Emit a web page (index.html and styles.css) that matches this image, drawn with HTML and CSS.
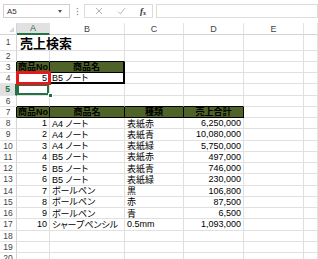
FILE: index.html
```html
<!DOCTYPE html>
<html lang="ja">
<head>
<meta charset="utf-8">
<title>売上検索</title>
<link rel="stylesheet" href="styles.css">
</head>
<body>
<div class="bar">
  <div class="namebox"><span class="nm">A5</span><span class="caret"></span></div>
  <div class="dots"><svg width="3" height="9" viewBox="0 0 3 9"><circle cx="1.5" cy="1.5" r="0.8" fill="#9a9a9a"/><circle cx="1.5" cy="4.5" r="0.8" fill="#9a9a9a"/><circle cx="1.5" cy="7.5" r="0.8" fill="#9a9a9a"/></svg></div>
  <div class="fxbox">
    <svg class="ico" width="8" height="8" viewBox="0 0 8 8"><path d="M1 1L7 7M7 1L1 7" stroke="#b4b4b4" stroke-width="1" fill="none"/></svg>
    <svg class="ico" width="9" height="8" viewBox="0 0 9 8"><path d="M1 4.5L3.3 6.8L8 1.2" stroke="#b4b4b4" stroke-width="1" fill="none"/></svg>
    <span class="fx"><i>f</i><sub>x</sub></span>
  </div>
  <div class="formula"></div>
</div>
<div class="sheet">
  <div class="corner"><svg width="5" height="5" viewBox="0 0 5 5"><path d="M5 0L5 5L0 5Z" fill="#d6d6d6"/></svg></div>
  <div class="ch sel">A</div><div class="ch">B</div><div class="ch">C</div><div class="ch">D</div><div class="ch">E</div><div class="ch"></div>

  <div class="rh">1</div><div class="c title">売上検索</div><div class="c"></div><div class="c"></div><div class="c"></div><div class="c"></div><div class="c"></div>

  <div class="rh">2</div><div class="c bb"></div><div class="c bb"></div><div class="c"></div><div class="c"></div><div class="c"></div><div class="c"></div>

  <div class="rh br">3</div><div class="c hd bk">商品No</div><div class="c hd bk br2">商品名</div><div class="c"></div><div class="c"></div><div class="c"></div><div class="c"></div>

  <div class="rh br">4</div><div class="c num bk bb2">5</div><div class="c bk bb2 br2">B5 ノート</div><div class="c"></div><div class="c"></div><div class="c"></div><div class="c"></div>

  <div class="rh rsel">5</div><div class="c active"></div><div class="c"></div><div class="c"></div><div class="c"></div><div class="c"></div><div class="c"></div>

  <div class="rh">6</div><div class="c bb"></div><div class="c bb"></div><div class="c bb"></div><div class="c bb"></div><div class="c"></div><div class="c"></div>

  <div class="rh br">7</div><div class="c hd bk">商品No</div><div class="c hd bk">商品名</div><div class="c hd bk">種類</div><div class="c hd bk">売上合計</div><div class="c"></div><div class="c"></div>

  <div class="rh">8</div><div class="c num">1</div><div class="c">A4 ノート</div><div class="c">表紙赤</div><div class="c num">6,250,000</div><div class="c"></div><div class="c"></div>
  <div class="rh">9</div><div class="c num">2</div><div class="c">A4 ノート</div><div class="c">表紙青</div><div class="c num">10,080,000</div><div class="c"></div><div class="c"></div>
  <div class="rh">10</div><div class="c num">3</div><div class="c">A4 ノート</div><div class="c">表紙緑</div><div class="c num">5,750,000</div><div class="c"></div><div class="c"></div>
  <div class="rh">11</div><div class="c num">4</div><div class="c">B5 ノート</div><div class="c">表紙赤</div><div class="c num">497,000</div><div class="c"></div><div class="c"></div>
  <div class="rh">12</div><div class="c num">5</div><div class="c">B5 ノート</div><div class="c">表紙青</div><div class="c num">746,000</div><div class="c"></div><div class="c"></div>
  <div class="rh">13</div><div class="c num">6</div><div class="c">B5 ノート</div><div class="c">表紙緑</div><div class="c num">230,000</div><div class="c"></div><div class="c"></div>
  <div class="rh">14</div><div class="c num">7</div><div class="c">ボールペン</div><div class="c">黒</div><div class="c num">106,800</div><div class="c"></div><div class="c"></div>
  <div class="rh">15</div><div class="c num">8</div><div class="c">ボールペン</div><div class="c">赤</div><div class="c num">87,500</div><div class="c"></div><div class="c"></div>
  <div class="rh">16</div><div class="c num">9</div><div class="c">ボールペン</div><div class="c">青</div><div class="c num">6,500</div><div class="c"></div><div class="c"></div>
  <div class="rh">17</div><div class="c num">10</div><div class="c">シャープペンシル</div><div class="c">0.5mm</div><div class="c num">1,093,000</div><div class="c"></div><div class="c"></div>
  <div class="rh">18</div><div class="c"></div><div class="c"></div><div class="c"></div><div class="c"></div><div class="c"></div><div class="c"></div>
  <div class="rh">19</div><div class="c"></div><div class="c"></div><div class="c"></div><div class="c"></div><div class="c"></div><div class="c"></div>
  <div class="rh">20</div><div class="c"></div><div class="c"></div><div class="c"></div><div class="c"></div><div class="c"></div><div class="c"></div>

  <div class="redbox"></div>
  <div class="handle"></div>
</div>
</body>
</html>
```

FILE: styles.css
```css
* { box-sizing: border-box; }
html, body { margin: 0; padding: 0; }
body {
  width: 318px;
  height: 259px;
  overflow: hidden;
  background: #fff;
  font-family: "Liberation Sans", "Noto Sans CJK JP", sans-serif;
  font-size: 9px;
  color: #000;
  font-feature-settings: "palt";
}

/* formula bar */
.bar {
  height: 23px;
  display: flex;
  align-items: flex-start;
  padding: 4px 0 0 3px;
}
.namebox {
  width: 67px;
  height: 14px;
  border: 1px solid #cfcfcf;
  display: flex;
  align-items: center;
  justify-content: space-between;
  padding: 0 7px 0 3px;
  font-size: 8px;
  color: #333;
}
.caret {
  width: 0;
  height: 0;
  border-left: 2.5px solid transparent;
  border-right: 2.5px solid transparent;
  border-top: 3px solid #555;
}
.dots {
  width: 14px;
  height: 14px;
  display: flex;
  align-items: center;
  justify-content: center;
}
.fxbox {
  width: 69px;
  height: 14px;
  margin-left: 0;
  border: 1px solid #dcdcdc;
  display: flex;
  align-items: center;
  padding-left: 10px;
  gap: 14px;
}
.fx {
  font-family: "Liberation Serif", serif;
  font-weight: bold;
  font-size: 9px;
  color: #333;
  line-height: 1;
}
.fx sub { font-size: 6px; vertical-align: -1px; }
.formula {
  flex: 1;
  height: 14px;
  margin-left: 3px;
  border: 1px solid #dcdcdc;
}

/* sheet */
.sheet {
  position: relative;
  display: grid;
  grid-template-columns: 17px 33px 75px 59px 60px 60px 1fr;
  grid-template-rows: 12px 15.5px repeat(19, 11.25px);
}
.sheet > div {
  border-right: 1px solid #e0e0e0;
  border-bottom: 1px solid #e0e0e0;
  white-space: nowrap;
  display: flex;
  align-items: center;
  min-width: 0;
}
.corner {
  justify-content: flex-end;
  align-items: flex-end !important;
  padding: 0 2px 2px 0;
  border-color: #d4d4d4 !important;
}
.ch {
  justify-content: center;
  color: #444;
  font-size: 9px;
  border-bottom-color: #d4d4d4 !important;
  border-right-color: #e4e4e4 !important;
}
.ch.sel {
  background: #e1e1e1;
  color: #217346;
  border-bottom: 2px solid #217346 !important;
}
.rh {
  justify-content: center;
  color: #444;
  font-size: 8.5px;
  border-right-color: #d4d4d4 !important;
  border-bottom-color: #e4e4e4 !important;
}
.rh.rsel {
  background: #e1e1e1;
  color: #217346;
  font-weight: bold;
  border-right: 2px solid #217346 !important;
}
.rh.br { border-right-color: #000 !important; }

.c { padding: 0 2px 0 2px; overflow: visible; }
.c.num { justify-content: flex-end; }
.c.title {
  font-size: 13px;
  font-weight: bold;
  font-family: "Noto Sans CJK JP", sans-serif;
  padding-left: 3px;
  border-right-color: transparent;
}
.c.hd {
  background: #4f6228;
  font-weight: bold;
  justify-content: center;
  padding: 0;
}
.c.bk { border-right-color: #000; border-bottom-color: #000; }
.c.bb { border-bottom-color: #000; }
.c.bb2 { border-bottom: 2px solid #000; }
.c.br2 { border-right: 2px solid #000; }
.c.active { box-shadow: inset 0 0 0 2px #217346; }

.redbox {
  position: absolute;
  left: 16px;
  top: 48px;
  width: 35px;
  height: 14px;
  border: 3px solid #e3191c !important;
  pointer-events: none;
}
.handle {
  position: absolute;
  left: 47.5px;
  top: 70px;
  width: 5px;
  height: 5px;
  background: #217346;
  border: 1px solid #fff !important;
}
```
